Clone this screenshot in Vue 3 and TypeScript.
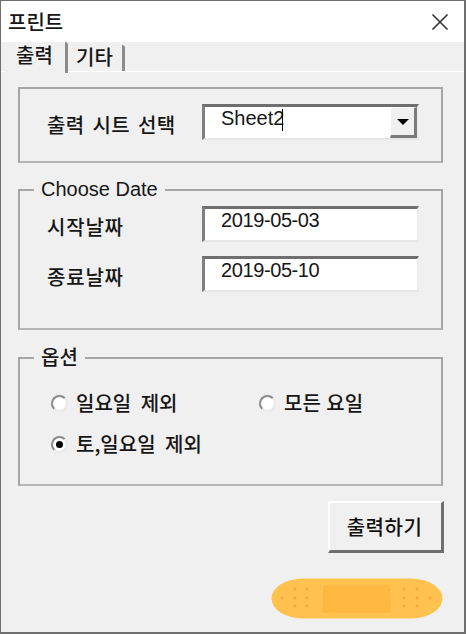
<script setup lang="ts">
import { ref } from 'vue'

const dotsLeft = [
  [24, 11], [36, 11],
  [11, 20], [24, 20], [36, 20],
  [24, 28], [36, 28],
]
const dotsRight = [
  [133, 11], [146, 11],
  [133, 20], [146, 20], [159, 20],
  [133, 28], [146, 28],
]
const dots = ref([...dotsLeft, ...dotsRight])
</script>

<template>
  <div class="window">
    <header class="titlebar">
      <span class="title">프린트</span>
      <svg class="close" width="18" height="18" viewBox="0 0 18 18" aria-hidden="true">
        <path d="M1.5 1.5 L16.5 16.5 M16.5 1.5 L1.5 16.5" stroke="#333" stroke-width="1.6" fill="none" />
      </svg>
    </header>

    <div class="tabs">
      <div class="tab active">출력</div>
      <div class="tab">기타</div>
    </div>

    <main class="panel">
      <section class="group group-sheet">
        <div class="row sheet-row">
          <span class="label">출력 시트 선택</span>
          <div class="field combo">
            <span class="value sheet-value">Sheet2<i class="caret"></i></span>
            <span class="combo-btn"><i class="arrow"></i></span>
          </div>
        </div>
      </section>

      <section class="group group-date">
        <span class="legend latin">Choose Date</span>
        <div class="row date-row">
          <span class="label">시작날짜</span>
          <div class="field"><span class="value">2019-05-03</span></div>
        </div>
        <div class="row date-row">
          <span class="label">종료날짜</span>
          <div class="field"><span class="value">2019-05-10</span></div>
        </div>
      </section>

      <section class="group group-option">
        <span class="legend">옵션</span>
        <div class="options">
          <label class="radio"><i class="dot"></i><span>일요일 제외</span></label>
          <label class="radio narrow"><i class="dot"></i><span>모든 요일</span></label>
          <label class="radio"><i class="dot on"></i><span>토,일요일 제외</span></label>
        </div>
      </section>

      <div class="actions">
        <button class="print" type="button">출력하기</button>
      </div>

      <div class="bandage-row">
        <svg class="bandage" width="172" height="41" viewBox="0 0 172 41" aria-hidden="true">
          <rect x="0.5" y="0.5" width="171" height="40" rx="32" ry="20" fill="#ffc24f" />
          <path d="M53 8 H118 L119 34 H52 Z" fill="#ffb941" stroke="#fdb23e" stroke-width="1" />
          <circle v-for="(d, i) in dots" :key="i" :cx="d[0]" :cy="d[1]" r="1.6" fill="#f8a93a" />
        </svg>
      </div>
    </main>
  </div>
</template>

<style scoped>
.window {
  box-sizing: border-box;
  width: 466px;
  height: 634px;
  background: #f0f0f0;
  border: 1px solid #6e6e6e;
  border-width: 1px 2px 2px 1px;
  font-family: "Noto Sans CJK KR", "Liberation Sans", sans-serif;
  font-size: 20px;
  font-weight: 500;
  color: #161616;
  overflow: hidden;
}
.titlebar {
  height: 41px;
  background: #fff;
  display: flex;
  align-items: center;
  justify-content: space-between;
  padding: 0 15px 0 7px;
}
.title {
  font-size: 20px;
  line-height: 1;
}
.close {
  display: block;
}
.tabs {
  height: 30px;
  display: flex;
  align-items: flex-end;
  padding-left: 4px;
  box-sizing: border-box;
  border-bottom: 1px solid #fff;
}
.tab {
  box-sizing: border-box;
  height: 26px;
  padding: 0 3px 0 8px;
  margin-right: 2px;
  line-height: 24px;
  font-size: 20px;
  border-right: 3px solid #8c8c8c;
  border-radius: 0 3px 0 0;
  width: 57px;
  white-space: nowrap;
}
.tab.active {
  height: 31px;
  width: 63px;
  padding-left: 11px;
  line-height: 26px;
  margin-bottom: -2px;
  margin-right: 0;
  position: relative;
  z-index: 1;
  background: #f0f0f0;
}
.panel {
  padding: 15px 21px 0 17px;
}
.group {
  position: relative;
  box-sizing: border-box;
  border: 2px solid #a6a6a6;
  border-bottom-color: #b4b4b4;
}
.group-sheet {
  height: 76px;
  padding: 15px 20px 0 27px;
}
.group-date {
  height: 141px;
  margin-top: 26px;
  padding: 15px 20px 0 27px;
}
.group-option {
  height: 129px;
  margin-top: 27px;
}
.legend {
  position: absolute;
  top: -13px;
  left: 14px;
  padding: 0 7px;
  background: #f0f0f0;
  line-height: 22px;
}
.latin {
  font-family: "Liberation Sans", sans-serif;
  font-weight: 400;
}
.row {
  display: flex;
  align-items: flex-start;
  justify-content: space-between;
}
.sheet-row .label {
  word-spacing: 3px;
  letter-spacing: 0.4px;
}
.date-row {
  margin-bottom: 12px;
}
.date-row .label {
  letter-spacing: 0.8px;
}
.label {
  line-height: 35px;
  padding-top: 3px;
  white-space: nowrap;
}
.field {
  box-sizing: border-box;
  width: 217px;
  height: 36px;
  margin-right: 2px;
  background: #fff;
  border-style: solid;
  border-width: 3px 2px 2px 3px;
  border-color: #6f6f6f #ececec #e6e6e6 #7f7f7f;
  display: flex;
  align-items: flex-start;
  font-family: "Liberation Sans", "Noto Sans CJK KR", sans-serif;
  font-weight: 400;
}
.value {
  padding: 0 0 0 16px;
  font-size: 20px;
  line-height: 23px;
  letter-spacing: -0.4px;
  flex: 1;
}
.sheet-value {
  position: relative;
  letter-spacing: 0;
}
.caret {
  display: inline-block;
  width: 1px;
  height: 22px;
  margin-left: -2px;
  vertical-align: -6px;
  background: #000;
}
.combo-btn {
  box-sizing: border-box;
  width: 27px;
  height: 31px;
  background: #f0f0f0;
  border-style: solid;
  border-width: 1px 3px 3px 1px;
  border-color: #fff #7a7a7a #7a7a7a #fff;
  display: flex;
  align-items: center;
  justify-content: center;
}
.arrow {
  width: 0;
  height: 0;
  border-left: 6px solid transparent;
  border-right: 6px solid transparent;
  border-top: 6px solid #000;
}
.options {
  display: grid;
  grid-template-columns: 208px 1fr;
  row-gap: 15px;
  padding: 31px 0 0 31px;
}
.radio {
  display: flex;
  align-items: center;
  gap: 8px;
  line-height: 26px;
  word-spacing: 5px;
  white-space: nowrap;
}
.radio.narrow {
  word-spacing: 1px;
}
.dot {
  position: relative;
  box-sizing: border-box;
  width: 17px;
  height: 17px;
  border-radius: 50%;
  background: #fff;
  border: 2px solid;
  border-color: #8a8a8a #e8e8e8 #e8e8e8 #8a8a8a;
  flex: none;
}
.dot.on::after {
  content: "";
  position: absolute;
  left: 3px;
  top: 3px;
  width: 7px;
  height: 7px;
  border-radius: 50%;
  background: #000;
}
.actions {
  display: flex;
  justify-content: flex-end;
  margin-top: 15px;
  margin-right: -1px;
}
.print {
  box-sizing: border-box;
  width: 116px;
  height: 52px;
  background: #f0f0f0;
  border-style: solid;
  border-width: 2px 3px 3px 2px;
  border-color: #fff #6e6e6e #6e6e6e #fff;
  font: inherit;
  color: #111;
  letter-spacing: 0.5px;
  padding: 0 2px 0 0;
}
.bandage-row {
  display: flex;
  justify-content: flex-end;
  margin-top: 25px;
}
.bandage {
  display: block;
}
</style>

<style>
html, body { margin: 0; background: #f0f0f0; }
</style>
